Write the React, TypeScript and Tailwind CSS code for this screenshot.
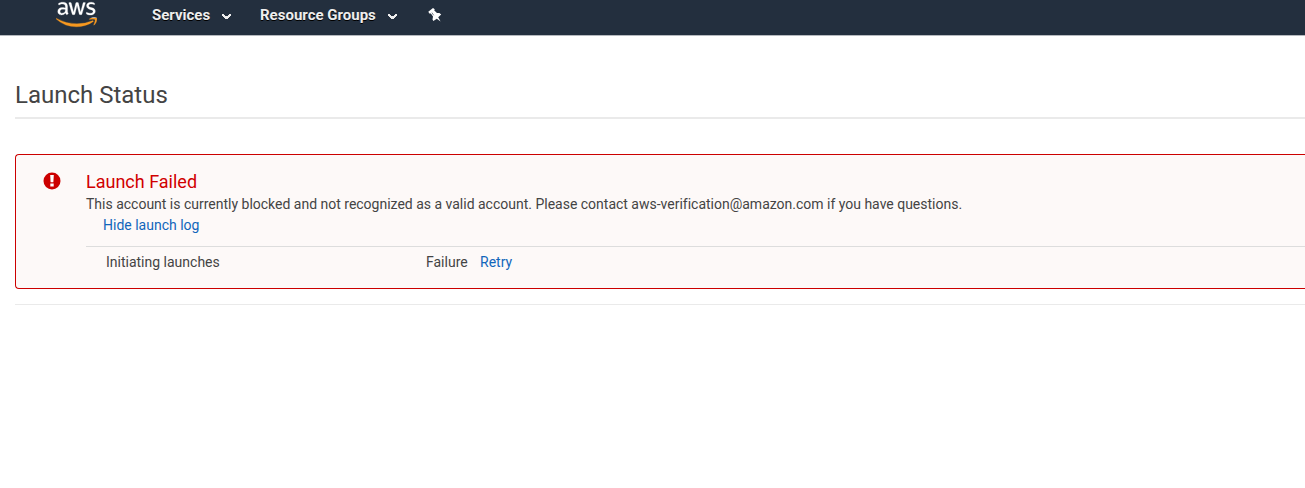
import React from "react";
import { FaAws } from "react-icons/fa";

function Chevron() {
  return (
    <svg width="9" height="5" viewBox="0 0 9 5" shapeRendering="crispEdges" className="mt-[3px]">
      <path d="M0 0H2V1H3V2H6V1H7V0H9V2H8V3H7V4H6V5H3V4H2V3H1V2H0Z" fill="#eee" />
    </svg>
  );
}

function AwsLogo() {
  return (
    <>
      <svg width="0" height="0" className="block">
        <defs>
          <linearGradient id="aws-fill" gradientUnits="userSpaceOnUse" x1="0" y1="0" x2="0" y2="512">
            <stop offset="0.6" stopColor="#fff" />
            <stop offset="0.6" stopColor="#f7981f" />
          </linearGradient>
        </defs>
      </svg>
      <FaAws fill="url(#aws-fill)" stroke="url(#aws-fill)" strokeWidth="4" className="-mt-[6px] size-[41px]" />
    </>
  );
}

function PushPin() {
  return (
    <svg width="14" height="14" viewBox="0 0 14 14" className="mt-[8px]">
      <path
        d="M0.3 3.8L5 0L6.7 1.2L6.3 2.6L9 5L11.4 4.9L13.2 6.6L10.2 9.3L12.6 13.6L8.8 10.7L5.4 13L4.5 11.4L5 8.6L2.9 5.4L1.3 5.5Z"
        fill="#fff"
      />
      <path d="M3.9 4.6L5.7 7.3" stroke="#232f3e" strokeWidth="0.6" />
    </svg>
  );
}

export default function App() {
  return (
    <div className="h-[488px] overflow-hidden bg-white font-['Roboto',sans-serif] text-[14px] text-[#444]">
      <header className="flex h-[36px] border-b border-[#b5b9be] bg-[#232f3e] text-[15px] leading-[18px] font-bold text-[#eee] [text-shadow:0_1px_0_#000]">
        <div className="ml-[56px] w-[96px]">
          <AwsLogo />
        </div>
        <div className="mt-[6px] flex h-[18px] w-[108px] items-center gap-[12px]">Services<Chevron /></div>
        <div className="mt-[6px] flex h-[18px] w-[168px] items-center gap-[12px]">Resource Groups<Chevron /></div>
        <PushPin />
      </header>
      <main className="pl-[15px]">
        <h1 className="mt-[43px] h-[40px] border-b-2 border-[#eaeaea] text-[24px] leading-[32px]">Launch Status</h1>
        <section className="mt-[35px] flex h-[135px] rounded-l-[4px] border border-r-0 border-[#c00] bg-[#fdf9f8]">
          <div className="w-[70px] shrink-0 pt-[17px] pl-[27px]">
            <svg width="18" height="18" viewBox="0 0 18 18">
              <circle cx="9" cy="9" r="8.5" fill="#c00" />
              <path d="M7.2 3h3.6l-.4 7.3h-2.8z" fill="#fff" />
              <path d="M7.3 11.5h3.4v3h-3.4z" fill="#fff" />
            </svg>
          </div>
          <div className="flex-1">
            <h2 className="mt-[15px] text-[18px] leading-[24px] text-[#d10000]">Launch Failed</h2>
            <p className="leading-[20px] tracking-[-0.005px]">This account is currently blocked and not recognized as a valid account. Please contact aws-verification@amazon.com if you have questions.</p>
            <a className="ml-[17px] block h-[32px] leading-[22px] text-[#1166bb]">Hide launch log</a>
            <div className="flex border-t border-[#ddd] pt-[5px] pl-[20px] leading-[20px]">
              <span className="w-[320px]">Initiating launches</span>
              <span className="w-[54px]">Failure</span>
              <a className="text-[#1166bb]">Retry</a>
            </div>
          </div>
        </section>
        <div className="mt-[15px] border-t border-[#eaeaea]" />
      </main>
    </div>
  );
}
